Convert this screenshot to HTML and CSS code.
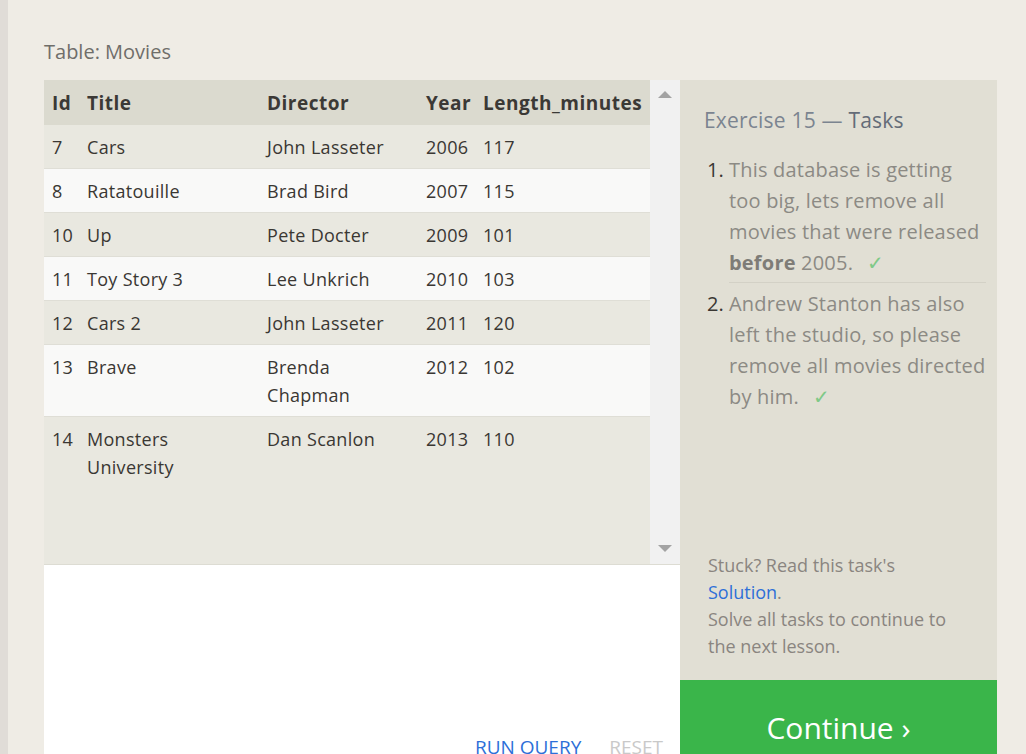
FILE: index.html
```html
<!DOCTYPE html>
<html lang="en">
<head>
<meta charset="utf-8">
<title>SQLBolt - Exercise 15</title>
<link rel="stylesheet" href="styles.css">
</head>
<body>
<div class="page">
  <div class="strip"></div>
  <main class="main">
    <div class="table-label">Table: Movies</div>
    <div class="exercise">
      <section class="left">
        <div class="results">
          <div class="results-body">
            <table class="movies">
              <thead>
                <tr><th class="c-id">Id</th><th class="c-title">Title</th><th class="c-dir">Director</th><th class="c-year">Year</th><th class="c-len">Length_minutes</th></tr>
              </thead>
              <tbody>
                <tr><td>7</td><td>Cars</td><td>John Lasseter</td><td>2006</td><td>117</td></tr>
                <tr><td>8</td><td>Ratatouille</td><td>Brad Bird</td><td>2007</td><td>115</td></tr>
                <tr><td>10</td><td>Up</td><td>Pete Docter</td><td>2009</td><td>101</td></tr>
                <tr><td>11</td><td>Toy Story 3</td><td>Lee Unkrich</td><td>2010</td><td>103</td></tr>
                <tr><td>12</td><td>Cars 2</td><td>John Lasseter</td><td>2011</td><td>120</td></tr>
                <tr><td>13</td><td>Brave</td><td>Brenda Chapman</td><td>2012</td><td>102</td></tr>
                <tr><td>14</td><td>Monsters University</td><td>Dan Scanlon</td><td>2013</td><td>110</td></tr>
              </tbody>
            </table>
          </div>
          <div class="scrollbar">
            <span class="arrow up"></span>
            <span class="arrow down"></span>
          </div>
        </div>
        <div class="editor">
          <div class="editor-area"></div>
          <div class="editor-actions">
            <span class="btn run">RUN QUERY</span>
            <span class="btn reset">RESET</span>
          </div>
        </div>
      </section>
      <aside class="tasks">
        <h2 class="tasks-title">Exercise 15 — <span class="tasks-word">Tasks</span></h2>
        <ol class="task-list">
          <li class="task">This database is getting too big, lets remove all movies that were released <strong>before</strong> 2005.<span class="check">✓</span></li>
          <li class="task">Andrew Stanton has also left the studio, so please remove all movies directed by him.<span class="check">✓</span></li>
        </ol>
        <div class="spacer"></div>
        <p class="stuck">Stuck? Read this task's <a class="solution" href="#">Solution</a>.<br>Solve all tasks to continue to the next lesson.</p>
        <div class="continue">Continue ›</div>
      </aside>
    </div>
  </main>
</div>
</body>
</html>
```

FILE: styles.css
```css
html, body {
  margin: 0;
  padding: 0;
}
body {
  background: #efece5;
  font-family: "Open Sans", "Noto Sans", sans-serif;
  color: #3a3733;
}
.page {
  display: flex;
  min-height: 754px;
}
.strip {
  width: 8px;
  flex: none;
  background: #e0dcd7;
}
.main {
  flex: 1;
  padding: 38px 0 0 36px;
}
.table-label {
  font-size: 20px;
  line-height: 28px;
  color: #6f6e6a;
  margin: 0 0 14px 0;
}
.exercise {
  display: flex;
  align-items: stretch;
}
.left {
  width: 636px;
  flex: none;
  display: flex;
  flex-direction: column;
}
.results {
  display: flex;
  height: 484px;
  background: #e9e8e0;
  border-bottom: 1px solid #dddcd3;
}
.results-body {
  flex: 1;
  overflow: hidden;
}
.movies {
  width: 606px;
  border-collapse: collapse;
  table-layout: fixed;
  font-size: 18px;
  line-height: 28px;
  letter-spacing: 0.3px;
}
.movies th {
  background: #dbdacf;
  text-align: left;
  font-weight: 700;
  font-size: 19px;
  letter-spacing: 0.5px;
  color: #3b3936;
  padding: 9px 0 8px 8px;
  white-space: nowrap;
}
.movies td {
  padding: 8px 6px 7px 8px;
  vertical-align: top;
  color: #3a3733;
  border-bottom: 1px solid #dfded6;
}
.movies tbody tr:nth-child(odd) td {
  background: #e9e8e0;
}
.movies tbody tr:nth-child(even) td {
  background: #f9f9f8;
}
.movies tbody tr:last-child td {
  border-bottom: none;
}
.c-id { width: 27px; }
.c-title { width: 172px; }
.c-dir { width: 151px; }
.c-year { width: 49px; }
.c-len { width: 167px; }
.scrollbar {
  width: 30px;
  flex: none;
  background: #f1f1f1;
  display: flex;
  flex-direction: column;
  justify-content: space-between;
  align-items: center;
  padding: 11px 0 12px;
  box-sizing: border-box;
}
.arrow {
  width: 0;
  height: 0;
  border-left: 7px solid transparent;
  border-right: 7px solid transparent;
}
.arrow.up {
  border-bottom: 7px solid #a3a3a3;
}
.arrow.down {
  border-top: 7px solid #a3a3a3;
}
.editor {
  background: #ffffff;
  flex: 1;
  display: flex;
  flex-direction: column;
}
.editor-area {
  height: 168px;
}
.editor-actions {
  display: flex;
  justify-content: flex-end;
  gap: 28px;
  padding: 0 17px 14px 0;
}
.btn {
  font-size: 19px;
  line-height: 28px;
}
.btn.run { color: #2d6fd8; }
.btn.reset { color: #c9c9c9; }
.tasks {
  width: 317px;
  flex: none;
  background: #e1dfd4;
  display: flex;
  flex-direction: column;
  min-height: 696px;
}
.tasks-title {
  margin: 0;
  padding: 26px 24px 0;
  font-size: 21px;
  line-height: 28px;
  letter-spacing: 0.2px;
  font-weight: 400;
  color: #7b8490;
}
.tasks-word {
  color: #646c78;
}
.task-list {
  margin: 20px 11px 0 0;
  padding: 0 0 0 49px;
}
.task {
  font-size: 20px;
  line-height: 31px;
  letter-spacing: 0.2px;
  color: #8c8a84;
  padding-bottom: 4px;
}
.task::marker {
  color: #3a3733;
  letter-spacing: 0;
}
.task + .task {
  border-top: 1px solid #d3d1c6;
  padding-top: 5px;
}
.task strong {
  color: #7e7c77;
  font-weight: 700;
}
.check {
  color: #7fc987;
  margin-left: 14px;
}
.spacer {
  flex: 1;
}
.stuck {
  margin: 0;
  padding: 0 44px 20px 28px;
  font-size: 18px;
  line-height: 27px;
  color: #8a8580;
}
.solution {
  color: #2d6fd8;
  text-decoration: none;
}
.continue {
  background: #3ab54a;
  color: #ffffff;
  font-size: 30px;
  line-height: 36px;
  text-align: center;
  padding: 30px 0 30px;
}
```
